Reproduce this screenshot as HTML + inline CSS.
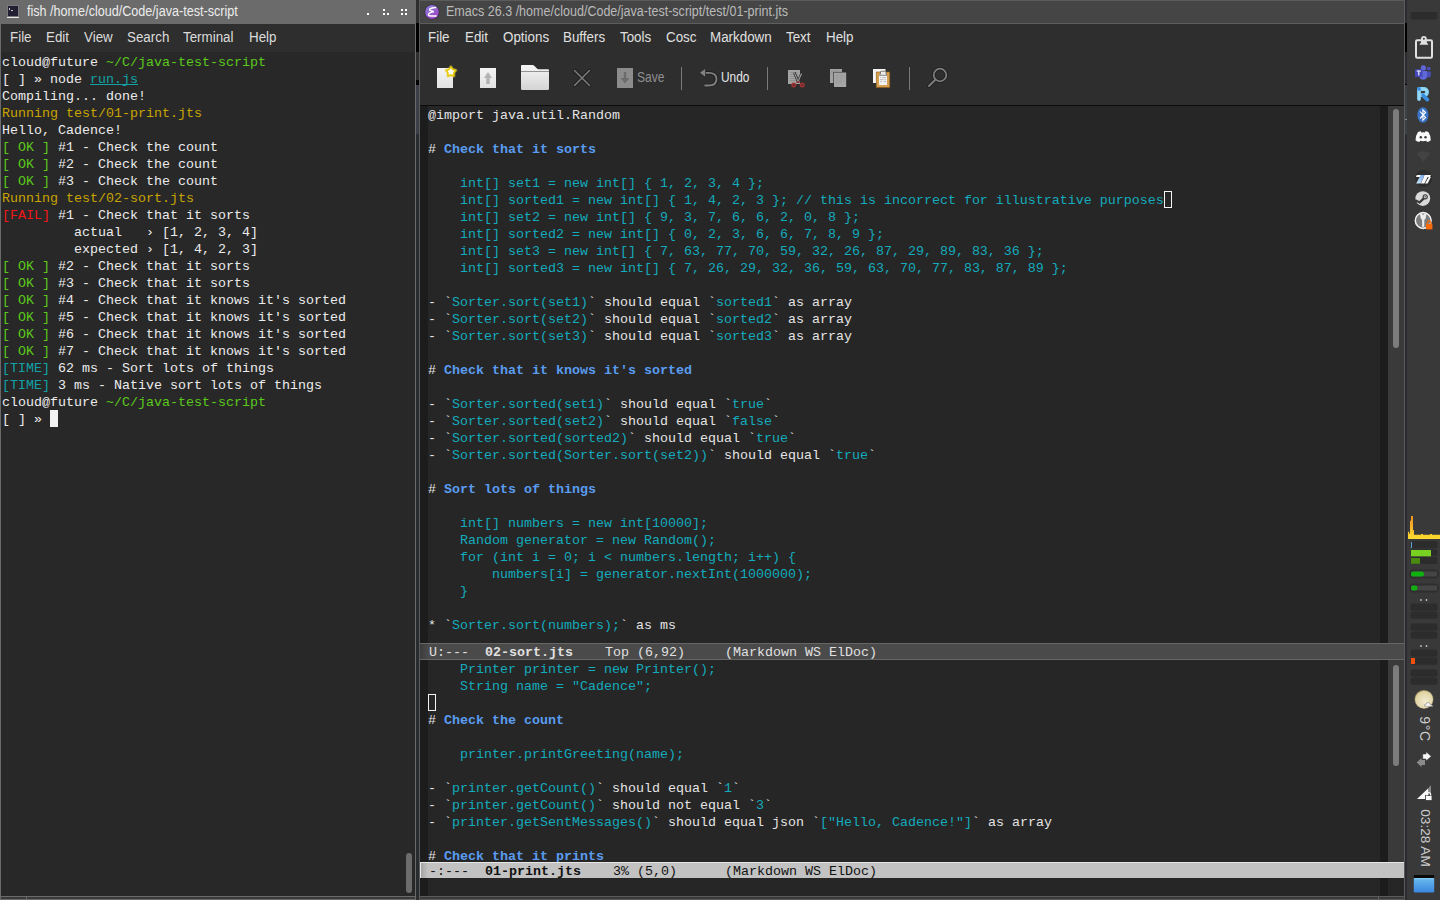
<!DOCTYPE html>
<html><head><meta charset="utf-8">
<style>
*{margin:0;padding:0;box-sizing:border-box}
html,body{width:1440px;height:900px;overflow:hidden;background:#2a2a2a;position:relative}
body{font-family:"Liberation Sans",sans-serif}
.a{position:absolute}
pre{font-family:"Liberation Mono",monospace;white-space:pre}
svg{position:absolute;overflow:visible}
/* terminal */
#term{left:0;top:0;width:416px;height:900px;background:#6a6a6a}
#ttitle{left:0;top:0;width:416px;height:24px;background:#6b6b6b;color:#ececec;font-size:14px}
.sx{transform:scaleX(.9);transform-origin:0 0}
.mx{transform:scaleX(.955);transform-origin:0 0}
#tmenu{left:1px;top:24px;width:414px;height:28px;background:#2e2e2e;color:#dcdcdc;font-size:14px}
#tbody{left:1px;top:52px;width:414px;height:844px;background:#282828}
#tterm{left:2px;top:54px;font-size:13.333px;line-height:17px;color:#ececec}
.g{color:#5bc81c}.y{color:#c8a400}.r{color:#f21818}.c{color:#12a2a6}
/* emacs */
#emacs{left:419px;top:0;width:986px;height:900px;background:#5a5a5a}
#etitle{left:420px;top:1px;width:984px;height:22px;background:#454545;color:#bababa;font-size:14px}
#emenu{left:420px;top:24px;width:984px;height:81px;background:#2e2e2e;color:#e0e0e0;font-size:14px}
#ebuf1{left:420px;top:106px;width:984px;height:537px;background:#262626;overflow:hidden}
#ebuf2{left:420px;top:660px;width:984px;height:202px;background:#262626;overflow:hidden}
#emini{left:420px;top:878px;width:984px;height:19px;background:#262626}
.fr{position:absolute;left:0;top:0;width:8px;height:100%;background:#1c1c1c}
.frr{position:absolute;left:960px;top:0;width:8px;height:100%;background:#1c1c1c}
.sb{position:absolute;left:968px;top:0;width:16px;height:100%;background:#3a3a3a}
.thumb{position:absolute;left:5px;width:6px;background:#7c7c7c;border-radius:3px}
.code{position:absolute;left:8px;font-size:13.333px;line-height:17px;color:#e4e4e4}
.k{color:#14abbd}.h{color:#5a9cf0;font-weight:bold}
.ml{position:absolute;left:420px;width:984px;height:17px;font-family:"Liberation Mono",monospace;font-size:13.333px;line-height:17px;white-space:pre;padding-left:9px}
#ml1{top:643px;background:linear-gradient(to right,#3c3c3c 0,#4a4a4a 8px);color:#e0e0e0;border-top:1px solid #666;border-bottom:1px solid #666}
#ml2{top:862px;background:linear-gradient(to right,#e8e8e8 0,#e8e8e8 1px,#a4a4a4 1px,#c2c2c2 8px);color:#111;border-top:1px solid #e6e6e6;border-bottom:1px solid #999}
/* panel */
#panel{left:1407px;top:0;width:33px;height:900px;background:#393939}
.pb{position:absolute;left:2px;width:28px;height:7px;background:#2c2c2c;border-radius:3px}
</style></head><body>
<div class="a" id="term"></div>
<div class="a" id="ttitle">
  <div class="a" style="left:7px;top:5px;width:12px;height:12px;background:#221f33;border:1px solid #7a7a7a"></div><div class="a" style="left:7px;top:17px;width:12px;height:1px;background:#e8e8e8"></div><div class="a" style="left:9px;top:8px;width:1px;height:2px;background:#ccc"></div><div class="a" style="left:11px;top:10px;width:2px;height:1px;background:#ccc"></div>
  <div class="a sx" style="left:27px;top:3px;white-space:pre">fish /home/cloud/Code/java-test-script</div>
  <div class="a" style="left:367px;top:13px;width:2px;height:2px;background:#fff"></div>
  <div class="a" style="left:383px;top:9px;width:2px;height:2px;background:#fff"></div>
  <div class="a" style="left:383px;top:13px;width:2px;height:2px;background:#fff"></div>
  <div class="a" style="left:387px;top:13px;width:2px;height:2px;background:#fff"></div>
  <div class="a" style="left:401px;top:9px;width:2px;height:2px;background:#fff"></div>
  <div class="a" style="left:405px;top:9px;width:2px;height:2px;background:#fff"></div>
  <div class="a" style="left:401px;top:13px;width:2px;height:2px;background:#fff"></div>
  <div class="a" style="left:405px;top:13px;width:2px;height:2px;background:#fff"></div>
</div>
<div class="a" id="tmenu">
  <span class="a mx" style="left:9px;top:5px">File</span>
  <span class="a mx" style="left:45px;top:5px">Edit</span>
  <span class="a mx" style="left:83px;top:5px">View</span>
  <span class="a mx" style="left:126px;top:5px">Search</span>
  <span class="a mx" style="left:182px;top:5px">Terminal</span>
  <span class="a mx" style="left:248px;top:5px">Help</span>
</div>
<div class="a" id="tbody"></div>
<pre class="a" id="tterm">cloud@future <span class="g">~/C/java-test-script</span>
[ ] » node <span class="c" style="text-decoration:underline;text-decoration-skip-ink:none">run.js</span>
Compiling... done!
<span class="y">Running test/01-print.jts</span>
Hello, Cadence!
<span class="g">[ OK ]</span> #1 - Check the count
<span class="g">[ OK ]</span> #2 - Check the count
<span class="g">[ OK ]</span> #3 - Check the count
<span class="y">Running test/02-sort.jts</span>
<span class="r">[FAIL]</span> #1 - Check that it sorts
         actual   › [1, 2, 3, 4]
         expected › [1, 4, 2, 3]
<span class="g">[ OK ]</span> #2 - Check that it sorts
<span class="g">[ OK ]</span> #3 - Check that it sorts
<span class="g">[ OK ]</span> #4 - Check that it knows it's sorted
<span class="g">[ OK ]</span> #5 - Check that it knows it's sorted
<span class="g">[ OK ]</span> #6 - Check that it knows it's sorted
<span class="g">[ OK ]</span> #7 - Check that it knows it's sorted
<span class="c">[TIME]</span> 62 ms - Sort lots of things
<span class="c">[TIME]</span> 3 ms - Native sort lots of things
cloud@future <span class="g">~/C/java-test-script</span>
[ ] » </pre>
<div class="a" style="left:50px;top:410px;width:8px;height:17px;background:#f2f2f2"></div>
<div class="a" style="left:406px;top:853px;width:6px;height:40px;background:#6c6c6c;border-radius:3px"></div>
<div class="a" style="left:1px;top:897px;width:414px;height:2px;background:#3a3a3a"></div><div class="a" style="left:26px;top:897px;width:1px;height:2px;background:#6a6a6a"></div>
<!-- gap strip -->
<div class="a" style="left:416px;top:0;width:3px;height:900px;background:#2e2e2e"></div>
<div class="a" style="left:416px;top:23px;width:3px;height:29px;background:#000"></div>
<div class="a" style="left:416px;top:80px;width:3px;height:5px;background:#000"></div><div class="a" style="left:416px;top:85px;width:3px;height:49px;background:#3a4046"></div><div class="a" style="left:416px;top:134px;width:3px;height:763px;background:#282b30"></div>

<div class="a" id="emacs"></div>
<div class="a" id="etitle">
  <svg style="left:5px;top:4px" width="16" height="16" viewBox="0 0 16 16">
    <defs><linearGradient id="eg" x1="0.2" y1="0" x2="0.8" y2="1"><stop offset="0" stop-color="#8a80d8"/><stop offset="1" stop-color="#a040c4"/></linearGradient></defs>
    <circle cx="7" cy="7" r="7.4" fill="#2a1f3a"/>
    <circle cx="7" cy="7" r="6.9" fill="url(#eg)"/>
    <path d="M10.6 2.6 C7.5 2.6 4.2 3.6 4.6 4.9 C5 6 8.6 5.8 8.2 6.8 C4.6 7.4 2.8 9 3.6 10.2 C4.5 11.4 8 11.1 11.2 10.9" fill="none" stroke="#fff" stroke-width="1.5" stroke-linecap="round"/>
  </svg>
  <div class="a" style="left:26px;top:2px;white-space:pre;transform:scaleX(.895);transform-origin:0 0">Emacs 26.3 /home/cloud/Code/java-test-script/test/01-print.jts</div>
</div>
<div class="a" style="left:420px;top:23px;width:984px;height:1px;background:#5e5e5e"></div>
<div class="a" id="emenu">
  <span class="a mx" style="left:8px;top:5px">File</span>
  <span class="a mx" style="left:45px;top:5px">Edit</span>
  <span class="a mx" style="left:83px;top:5px">Options</span>
  <span class="a mx" style="left:143px;top:5px">Buffers</span>
  <span class="a mx" style="left:200px;top:5px">Tools</span>
  <span class="a mx" style="left:246px;top:5px">Cosc</span>
  <span class="a mx" style="left:290px;top:5px">Markdown</span>
  <span class="a mx" style="left:366px;top:5px">Text</span>
  <span class="a mx" style="left:406px;top:5px">Help</span>
</div>
<!-- toolbar icons (absolute coords) -->
<svg style="left:0;top:0" width="1440" height="110" viewBox="0 0 1440 110">
  <defs>
    <linearGradient id="pg" x1="0" y1="0" x2="0" y2="1"><stop offset="0" stop-color="#f4f4f4"/><stop offset="1" stop-color="#e2e2e2"/></linearGradient>
    <linearGradient id="fg" x1="0" y1="0" x2="0" y2="1"><stop offset="0" stop-color="#f6f6f6"/><stop offset="1" stop-color="#d4d4d4"/></linearGradient>
  </defs>
  <!-- new -->
  <rect x="437" y="68" width="16" height="20" fill="url(#pg)"/>
  <path d="M450.90 66.90 L452.72 69.39 L455.66 70.35 L453.85 72.86 L453.84 75.95 L450.90 75.00 L447.96 75.95 L447.95 72.86 L446.14 70.35 L449.08 69.39 Z" fill="#fff" stroke="#f0dc40" stroke-width="3.4" stroke-linejoin="round" opacity="0.4"/><path d="M450.90 66.90 L452.72 69.39 L455.66 70.35 L453.85 72.86 L453.84 75.95 L450.90 75.00 L447.96 75.95 L447.95 72.86 L446.14 70.35 L449.08 69.39 Z" fill="#fff" stroke="#e4c800" stroke-width="1.6" stroke-linejoin="round"/>
  <!-- open -->
  <rect x="480" y="68" width="16" height="20" fill="url(#pg)"/>
  <path d="M488 72 L492 78 L489.8 78 L489.8 84 L486.2 84 L486.2 78 L484 78 Z" fill="#b4b4b4"/>
  <!-- folder -->
  <path d="M521 66 Q521 65 522 65 L532.5 65 Q533.5 65 534.5 66 L537 68.6 Q537.6 69.2 538.5 69.2 L548 69.2 Q549 69.2 549 70.2 L549 89 Q549 90 547.5 90 L522.5 90 Q521 90 521 89 Z" fill="url(#fg)"/>
  <rect x="521" y="71" width="28" height="0.9" fill="#8a8a8a"/>
  <!-- X -->
  <path d="M574.5 70.5 L589.5 85.5 M589.5 70.5 L574.5 85.5" stroke="#1e1e1e" stroke-width="3.2" stroke-linecap="round"/>
  <path d="M574.5 70.5 L589.5 85.5 M589.5 70.5 L574.5 85.5" stroke="#7a7a7a" stroke-width="1.6" stroke-linecap="round"/>
  <!-- save -->
  <rect x="617" y="68" width="16" height="20" fill="#8c8c8c"/>
  <path d="M623.8 72 L626.2 72 L626.2 78 L629.5 78 L625 83.5 L620.5 78 L623.8 78 Z" fill="#6c6c6c"/>
  <rect x="681" y="67" width="1" height="23" fill="#7a7a7a"/>
  <!-- undo -->
  <path d="M705 72.8 L708.5 72.8 Q716.5 72.8 716.5 79 Q716.5 85.5 708.5 85.5 L704.5 85.5" fill="none" stroke="#1e1e1e" stroke-width="3.4"/>
  <path d="M705 72.8 L708.5 72.8 Q716.5 72.8 716.5 79 Q716.5 85.5 708.5 85.5 L704.5 85.5" fill="none" stroke="#828282" stroke-width="1.8"/>
  <path d="M699.5 72.8 L705.5 68.3 L705.5 77.3 Z" fill="#828282" stroke="#1e1e1e" stroke-width="0.6"/>
  <rect x="767" y="67" width="1" height="23" fill="#7a7a7a"/>
  <!-- cut -->
  <rect x="788" y="70" width="12" height="14" fill="#a4a4a4"/>
  <path d="M790 72.5h8M790 74.5h8M790 76.5h8M790 78.5h8M790 80.5h6" stroke="#8a8a8a" stroke-width="0.7"/>
  <path d="M794.4 72.6 L798 81.6 L801.6 73.4" fill="none" stroke="#2a2a2a" stroke-width="2.6" stroke-linejoin="round"/>
  <path d="M794.4 72.6 L798 81.6 L801.6 73.4" fill="none" stroke="#9a9a9a" stroke-width="1.2" stroke-linejoin="round"/>
  <path d="M796.4 82.6 L798 81.6 L799.6 82.6" fill="none" stroke="#9a3232" stroke-width="1.4"/>
  <circle cx="793.7" cy="85.1" r="2.5" fill="#9e3434"/>
  <circle cx="802.2" cy="85.1" r="2.5" fill="#9e3434"/>
  <circle cx="793.7" cy="85.1" r="0.8" fill="#4a2020"/>
  <circle cx="802.2" cy="85.1" r="0.8" fill="#4a2020"/>
  <!-- copy -->
  <rect x="830" y="69" width="12" height="14" fill="#a2a2a2"/>
  <rect x="833.4" y="71.9" width="13.4" height="15.7" fill="#2a2a2a"/><rect x="834" y="72.5" width="12.2" height="14.5" fill="#a6a6a6"/>
  <path d="M835.5 75h9M835.5 77h9M835.5 79h9M835.5 81h9M835.5 83h6" stroke="#888" stroke-width="0.5" stroke-dasharray="3 0.8"/>
  <path d="M831 71h8M831 73h2" stroke="#8e8e8e" stroke-width="0.7"/>
  <!-- paste -->
  <rect x="873" y="69" width="12.5" height="14" fill="#f6f6f6"/>
  <rect x="876.2" y="72" width="13.6" height="15.5" fill="#d4a050" stroke="#8a5a18" stroke-width="0.6"/>
  <rect x="879" y="74.5" width="8" height="10.5" fill="#f2f2f2"/>
  <path d="M879.5 75.3 L880.5 73.6 V71.8 Q880.5 71.2 881.2 71.2 H885.3 Q886 71.2 886 71.8 V73.6 L887 75.3 Z" fill="#ececec" stroke="#555" stroke-width="0.7"/>
  <path d="M880 77.6h1M882.2 77.6h4M880 79.6h3.5M884.5 79.6h1.5M880 81.6h2M883.5 81.6h2.5" stroke="#8a8a8a" stroke-width="0.5"/>
  <rect x="909" y="67" width="1" height="23" fill="#7a7a7a"/>
  <!-- search -->
  <circle cx="940" cy="75" r="6.3" fill="none" stroke="#1e1e1e" stroke-width="3.4"/>
  <line x1="935.5" y1="79.5" x2="929" y2="86" stroke="#1e1e1e" stroke-width="3.6" stroke-linecap="round"/>
  <circle cx="940" cy="75" r="6.3" fill="none" stroke="#7c7c7c" stroke-width="1.8"/>
  <line x1="935.5" y1="79.5" x2="929" y2="86" stroke="#7c7c7c" stroke-width="2" stroke-linecap="round"/>
</svg>
<div class="a" style="left:637px;top:69px;font-size:14px;color:#8e8e8e;transform:scaleX(.86);transform-origin:0 0">Save</div>
<div class="a" style="left:721px;top:69px;font-size:14px;color:#e6e6e6;transform:scaleX(.85);transform-origin:0 0">Undo</div>
<div class="a" style="left:420px;top:105px;width:984px;height:1px;background:#0c0c0c"></div>

<div class="a" id="ebuf1"><div class="fr"></div><div class="frr"></div><div class="sb"><div class="thumb" style="top:3px;height:239px"></div></div>
<pre class="code" style="top:1px">@import java.util.Random

# <span class="h">Check that it sorts</span>

<span class="k">    int[] set1 = new int[] { 1, 2, 3, 4 };
    int[] sorted1 = new int[] { 1, 4, 2, 3 }; // this is incorrect for illustrative purposes</span>
<span class="k">    int[] set2 = new int[] { 9, 3, 7, 6, 6, 2, 0, 8 };
    int[] sorted2 = new int[] { 0, 2, 3, 6, 6, 7, 8, 9 };
    int[] set3 = new int[] { 7, 63, 77, 70, 59, 32, 26, 87, 29, 89, 83, 36 };
    int[] sorted3 = new int[] { 7, 26, 29, 32, 36, 59, 63, 70, 77, 83, 87, 89 };</span>

- `<span class="k">Sorter.sort(set1)</span>` should equal `<span class="k">sorted1</span>` as array
- `<span class="k">Sorter.sort(set2)</span>` should equal `<span class="k">sorted2</span>` as array
- `<span class="k">Sorter.sort(set3)</span>` should equal `<span class="k">sorted3</span>` as array

# <span class="h">Check that it knows it's sorted</span>

- `<span class="k">Sorter.sorted(set1)</span>` should equal `<span class="k">true</span>`
- `<span class="k">Sorter.sorted(set2)</span>` should equal `<span class="k">false</span>`
- `<span class="k">Sorter.sorted(sorted2)</span>` should equal `<span class="k">true</span>`
- `<span class="k">Sorter.sorted(Sorter.sort(set2))</span>` should equal `<span class="k">true</span>`

# <span class="h">Sort lots of things</span>

<span class="k">    int[] numbers = new int[10000];
    Random generator = new Random();
    for (int i = 0; i &lt; numbers.length; i++) {
        numbers[i] = generator.nextInt(1000000);
    }</span>

* `<span class="k">Sorter.sort(numbers);</span>` as ms
</pre>
<div class="a" style="left:744px;top:85px;width:8px;height:17px;border:1.3px solid #f4f4f4"></div>
</div>
<div class="ml" id="ml1">U:---  <b>02-sort.jts</b>    Top (6,92)     (Markdown WS ElDoc)</div>
<div class="a" id="ebuf2"><div class="fr"></div><div class="frr"></div><div class="sb"><div class="thumb" style="top:5px;height:101px"></div></div>
<pre class="code" style="top:1px"><span class="k">    Printer printer = new Printer();
    String name = "Cadence";</span>

# <span class="h">Check the count</span>

<span class="k">    printer.printGreeting(name);</span>

- `<span class="k">printer.getCount()</span>` should equal `<span class="k">1</span>`
- `<span class="k">printer.getCount()</span>` should not equal `<span class="k">3</span>`
- `<span class="k">printer.getSentMessages()</span>` should equal json `<span class="k">["Hello, Cadence!"]</span>` as array

# <span class="h">Check that it prints</span></pre>
<div class="a" style="left:8px;top:34px;width:8px;height:17px;border:1.3px solid #f4f4f4"></div>
</div>
<div class="ml" id="ml2">-:---  <b>01-print.jts</b>    3% (5,0)      (Markdown WS ElDoc)</div>
<div class="a" id="emini" style="height:18px"><div class="fr"></div><div class="frr"></div></div>
<div class="a" style="left:420px;top:897px;width:984px;height:2px;background:#3a3a3a"></div><div class="a" style="left:1378px;top:897px;width:1px;height:2px;background:#6a6a6a"></div>

<div class="a" style="left:1405px;top:0;width:2px;height:900px;background:#2a2c30"></div><div class="a" style="left:1405px;top:23px;width:2px;height:29px;background:#000"></div><div class="a" style="left:1405px;top:84px;width:2px;height:1px;background:#000"></div><div class="a" style="left:1405px;top:85px;width:2px;height:49px;background:#3a4046"></div><div class="a" style="left:1405px;top:119px;width:2px;height:1px;background:#8a8a8a"></div>
<div class="a" id="panel"></div>
<svg style="left:0;top:0" width="1440" height="900" viewBox="0 0 1440 900">
  <rect x="1410.5" y="12" width="27" height="7.6" rx="2.2" fill="#2c2c2c"/>
  <!-- clipboard -->
  <rect x="1416" y="40.3" width="16" height="17.4" rx="1.2" fill="none" stroke="#e0e0e0" stroke-width="2"/>
  <circle cx="1423.9" cy="38.9" r="2.9" fill="#e0e0e0"/>
  <path d="M1419.3 44.8 L1421 42.5 L1421 39.5 L1426.8 39.5 L1426.8 42.5 L1428.5 44.8 Z" fill="#e0e0e0"/>
  <circle cx="1423.9" cy="38.7" r="1" fill="#393939"/>
  <!-- teams -->
  <circle cx="1428.7" cy="68.6" r="1.9" fill="#4a4fb8"/>
  <path d="M1426.3 71.5 h4.5 v4.5 a2.4 2.4 0 0 1 -4.5 0 z" fill="#4a4fb8"/>
  <circle cx="1423.4" cy="67.9" r="2.6" fill="#6068d8"/>
  <path d="M1419.5 71 h7.5 v5.5 a3.8 3.8 0 0 1 -7.5 0 z" fill="#6068d8"/>
  <rect x="1415" y="69.2" width="7.5" height="7.8" rx="0.6" fill="#4448b8"/>
  <path d="M1416.7 71 h4.2 M1418.8 71 v4.5" stroke="#fff" stroke-width="1.1"/>
  <!-- R -->
  <path d="M1419 99 V89 H1424 A3.1 3.1 0 0 1 1424 95.2 H1421.5" fill="none" stroke="#86d0f4" stroke-width="3.8" stroke-linecap="round" stroke-linejoin="round"/>
  <path d="M1419 99 V89.5 M1420.5 89 H1424 A3.1 3.1 0 0 1 1424 95.2" fill="none" stroke="#b0e4fa" stroke-width="1" stroke-linecap="round" opacity="0.7"/>
  <line x1="1423.2" y1="95.6" x2="1427.3" y2="99.6" stroke="#3a8ee0" stroke-width="3.8" stroke-linecap="round"/>
  <circle cx="1419" cy="88.9" r="1.9" fill="#3a8ee0"/>
  <!-- bluetooth -->
  <ellipse cx="1422.9" cy="115" rx="5.6" ry="7.8" fill="#3a72c4"/>
  <path d="M1420 111.5 L1425.6 117.6 L1422.9 120.2 V109.8 L1425.6 112.5 L1420 118.5" fill="none" stroke="#fff" stroke-width="1.1"/>
  <!-- discord -->
  <path d="M1418 132 Q1420.5 131 1421 131.5 L1421.4 132.4 Q1423.1 132.1 1424.9 132.4 L1425.3 131.5 Q1425.8 131 1428.4 132 Q1431 136 1430.8 140.2 Q1429 141.8 1427 142 L1426.2 140.8 Q1423.1 141.6 1420.1 140.8 L1419.3 142 Q1417.3 141.8 1415.5 140.2 Q1415.3 136 1418 132 Z" fill="#fafafa"/>
  <ellipse cx="1420.8" cy="137.3" rx="1.2" ry="1.3" fill="#393939"/>
  <ellipse cx="1425.5" cy="137.3" rx="1.2" ry="1.3" fill="#393939"/>
  <!-- wifi faint -->
  <path d="M1416.5 153.5 Q1423.5 149 1430.5 153.5 L1423.5 162 Z" fill="#434343"/>
  <!-- 7/7 -->
  <circle cx="1423.6" cy="178.4" r="8.6" fill="#2e2e2e"/>
  <defs><linearGradient id="b77" x1="0" y1="1" x2="1" y2="0"><stop offset="0" stop-color="#d4f0fc"/><stop offset="1" stop-color="#6e9ee6"/></linearGradient></defs>
  <path d="M1416.8 175 L1431 175 L1430 177 L1416 177 Z" fill="#fafafa"/>
  <path d="M1420.6 175 L1425 175 L1420.6 183.6 L1416.2 183.6 Z" fill="url(#b77)"/>
  <path d="M1425 175 L1428.6 175 L1424.4 183.6 L1420.8 183.6 Z" fill="#fafafa"/>
  <path d="M1428.8 177 L1430.9 177 L1427.6 183.6 L1425.1 183.6 Z" fill="#fafafa"/>
  <!-- steam -->
  <circle cx="1422.8" cy="198.6" r="7.4" fill="#dadada"/>
  <path d="M1415.8 200.6 L1419.6 202.4 L1424.6 197.6" fill="none" stroke="#3a3a3a" stroke-width="2.2" stroke-linecap="round"/>
  <circle cx="1425.2" cy="196.8" r="2.6" fill="#3a3a3a"/>
  <circle cx="1425.2" cy="196.8" r="1.5" fill="#dadada"/>
  <circle cx="1425.2" cy="196.8" r="0.7" fill="#3a3a3a"/>
  <!-- keepass -->
  <circle cx="1423.2" cy="220.5" r="7.9" fill="#7c7c7c" stroke="#f4f4f4" stroke-width="1.5"/>
  <path d="M1419.8 213.6 Q1423.2 212.2 1426.6 213.6 L1425.6 218.5 L1424.3 220 V226.5 L1423.2 227.6 L1422.1 226.5 V220 L1420.8 218.5 Z" fill="#ececec"/>
  <rect x="1422.3" y="213.4" width="1.8" height="1.2" fill="#7c7c7c"/>
  <rect x="1426" y="223.8" width="6.4" height="5.6" fill="#f56a0a"/>
  <path d="M1427.5 223.8 V222.6 A1.7 1.7 0 0 1 1430.9 222.6 V223.8" fill="none" stroke="#f56a0a" stroke-width="1.3"/>
  <!-- cpu graph -->
  <defs><linearGradient id="cg" gradientUnits="userSpaceOnUse" x1="0" y1="515" x2="0" y2="539"><stop offset="0" stop-color="#f08c20"/><stop offset="1" stop-color="#fcdc30"/></linearGradient></defs>
  <path d="M1408 539 V531.8 H1409.2 V533.8 H1410 V520.8 H1411 V515.9 H1413 V529.9 H1414 V534.8 H1421 V534.1 H1423 V534.8 H1430 V534.1 H1432 V534.8 H1440 V539 Z" fill="url(#cg)"/>
  <!-- mem box -->
  <rect x="1410.5" y="541" width="27" height="7.3" rx="2.5" fill="#2c2c2c"/>
  <rect x="1410.5" y="549.3" width="27" height="6.8" rx="2.5" fill="#2c2c2c"/>
  <rect x="1410.5" y="557" width="27" height="7" rx="2.5" fill="#2c2c2c"/>
  <rect x="1411" y="542" width="1" height="6" fill="#5aa0e0"/>
  <rect x="1411" y="550" width="20" height="6.3" fill="#78d020"/>
  <rect x="1411" y="558" width="9" height="5.8" fill="#4a8a10"/>
  <rect x="1409" y="569.5" width="30" height="9" rx="4.5" fill="#2e2e2e"/>
  <rect x="1411" y="571.5" width="26" height="5" fill="#454545"/>
  <rect x="1411" y="571.5" width="13" height="5" rx="2.5" fill="#10b010"/>
  <rect x="1409" y="583.5" width="30" height="9" rx="4.5" fill="#2e2e2e"/>
  <rect x="1411" y="585.5" width="26" height="5" fill="#454545"/>
  <rect x="1411" y="585.5" width="6.5" height="5" rx="2.5" fill="#10b010"/>
  <rect x="1420.3" y="599" width="1.4" height="2" fill="#bbb"/><rect x="1425.8" y="599" width="1.4" height="2" fill="#bbb"/>
  <rect x="1410.5" y="603.5" width="27" height="7.3" rx="2.5" fill="#2c2c2c"/>
  <rect x="1410.5" y="611.5" width="27" height="7.3" rx="2.5" fill="#2c2c2c"/>
  <rect x="1410.5" y="623.5" width="27" height="7.3" rx="2.5" fill="#2c2c2c"/>
  <rect x="1410.5" y="631.5" width="27" height="7.3" rx="2.5" fill="#2c2c2c"/>
  <rect x="1420.3" y="645" width="1.4" height="2" fill="#bbb"/><rect x="1425.8" y="645" width="1.4" height="2" fill="#bbb"/>
  <rect x="1410.5" y="649.5" width="27" height="7.3" rx="2.5" fill="#2c2c2c"/>
  <rect x="1410.5" y="657.5" width="27" height="7.3" rx="2.5" fill="#2c2c2c"/>
  <rect x="1411" y="658" width="4" height="6" fill="#f05008"/>
  <rect x="1410.5" y="669.5" width="27" height="7.3" rx="2.5" fill="#2c2c2c"/>
  <rect x="1410.5" y="677.5" width="27" height="7.3" rx="2.5" fill="#2c2c2c"/>
  <!-- moon -->
  <defs><radialGradient id="mg" cx="0.55" cy="0.6" r="0.6"><stop offset="0" stop-color="#f2ead0"/><stop offset="0.85" stop-color="#e0d4a4"/><stop offset="1" stop-color="#cdb878"/></radialGradient></defs>
  <circle cx="1424" cy="699.4" r="9.6" fill="#d8c890" opacity="0.35"/>
  <circle cx="1424" cy="699.4" r="9" fill="url(#mg)"/>
  <path d="M1424.3 706.2 Q1424.5 704.2 1426 704.3 Q1426.5 702.3 1428.5 702.6 Q1430.5 702.8 1430.3 704.6 Q1432.8 705 1433 706.5 Z" fill="#f6f6f6" stroke="#707070" stroke-width="0.5"/>
  <!-- arrows -->
  <path d="M1421.5 760 L1425 760 L1425 765 L1421.5 765 L1421.5 767 L1416.7 762.5 L1421.5 758 Z" fill="#8a8a8a"/>
  <path d="M1422.7 754 L1426 754 L1426 751.7 L1431.3 756.3 L1426 761 L1426 759 L1422.7 759 Z" fill="#f8f8f8" stroke="#393939" stroke-width="0.6"/>
  <!-- signal -->
  <path d="M1417 799 L1428.5 788 L1428.5 799 Z" fill="#f8f8f8"/>
  <path d="M1428.5 788 L1431 785 L1431 793 L1428.5 793 Z" fill="#8a8a8a"/>
  <rect x="1425.5" y="795.5" width="6.5" height="5" fill="#f8f8f8" stroke="#393939" stroke-width="0.8"/>
  <path d="M1427 795.5 V794.5 A1.8 1.8 0 0 1 1430.6 794.5 V795.5" fill="none" stroke="#f8f8f8" stroke-width="1.3"/>
  <!-- blue rect -->
  <defs><linearGradient id="bg1" x1="0" y1="0" x2="0" y2="1"><stop offset="0" stop-color="#8ad0f8"/><stop offset="0.15" stop-color="#62b4ec"/><stop offset="1" stop-color="#3a86e0"/></linearGradient></defs>
  <rect x="1413.8" y="875" width="20.4" height="3" rx="0.8" fill="#0a0a0a"/>
  <rect x="1413.8" y="878" width="20.4" height="14.5" rx="1" fill="url(#bg1)"/>
</svg>
<div class="a" style="left:1411px;top:722px;width:28px;height:14px;transform:rotate(90deg);transform-origin:14px 7px;font-size:14px;color:#cccccc;text-align:center;line-height:14px;letter-spacing:0.6px">9°C</div>
<div class="a" style="left:1395px;top:831px;width:60px;height:14px;transform:rotate(90deg);transform-origin:30px 7px;font-size:13.6px;color:#cccccc;text-align:center;line-height:14px;white-space:nowrap">03:28 AM</div>
</body></html>
